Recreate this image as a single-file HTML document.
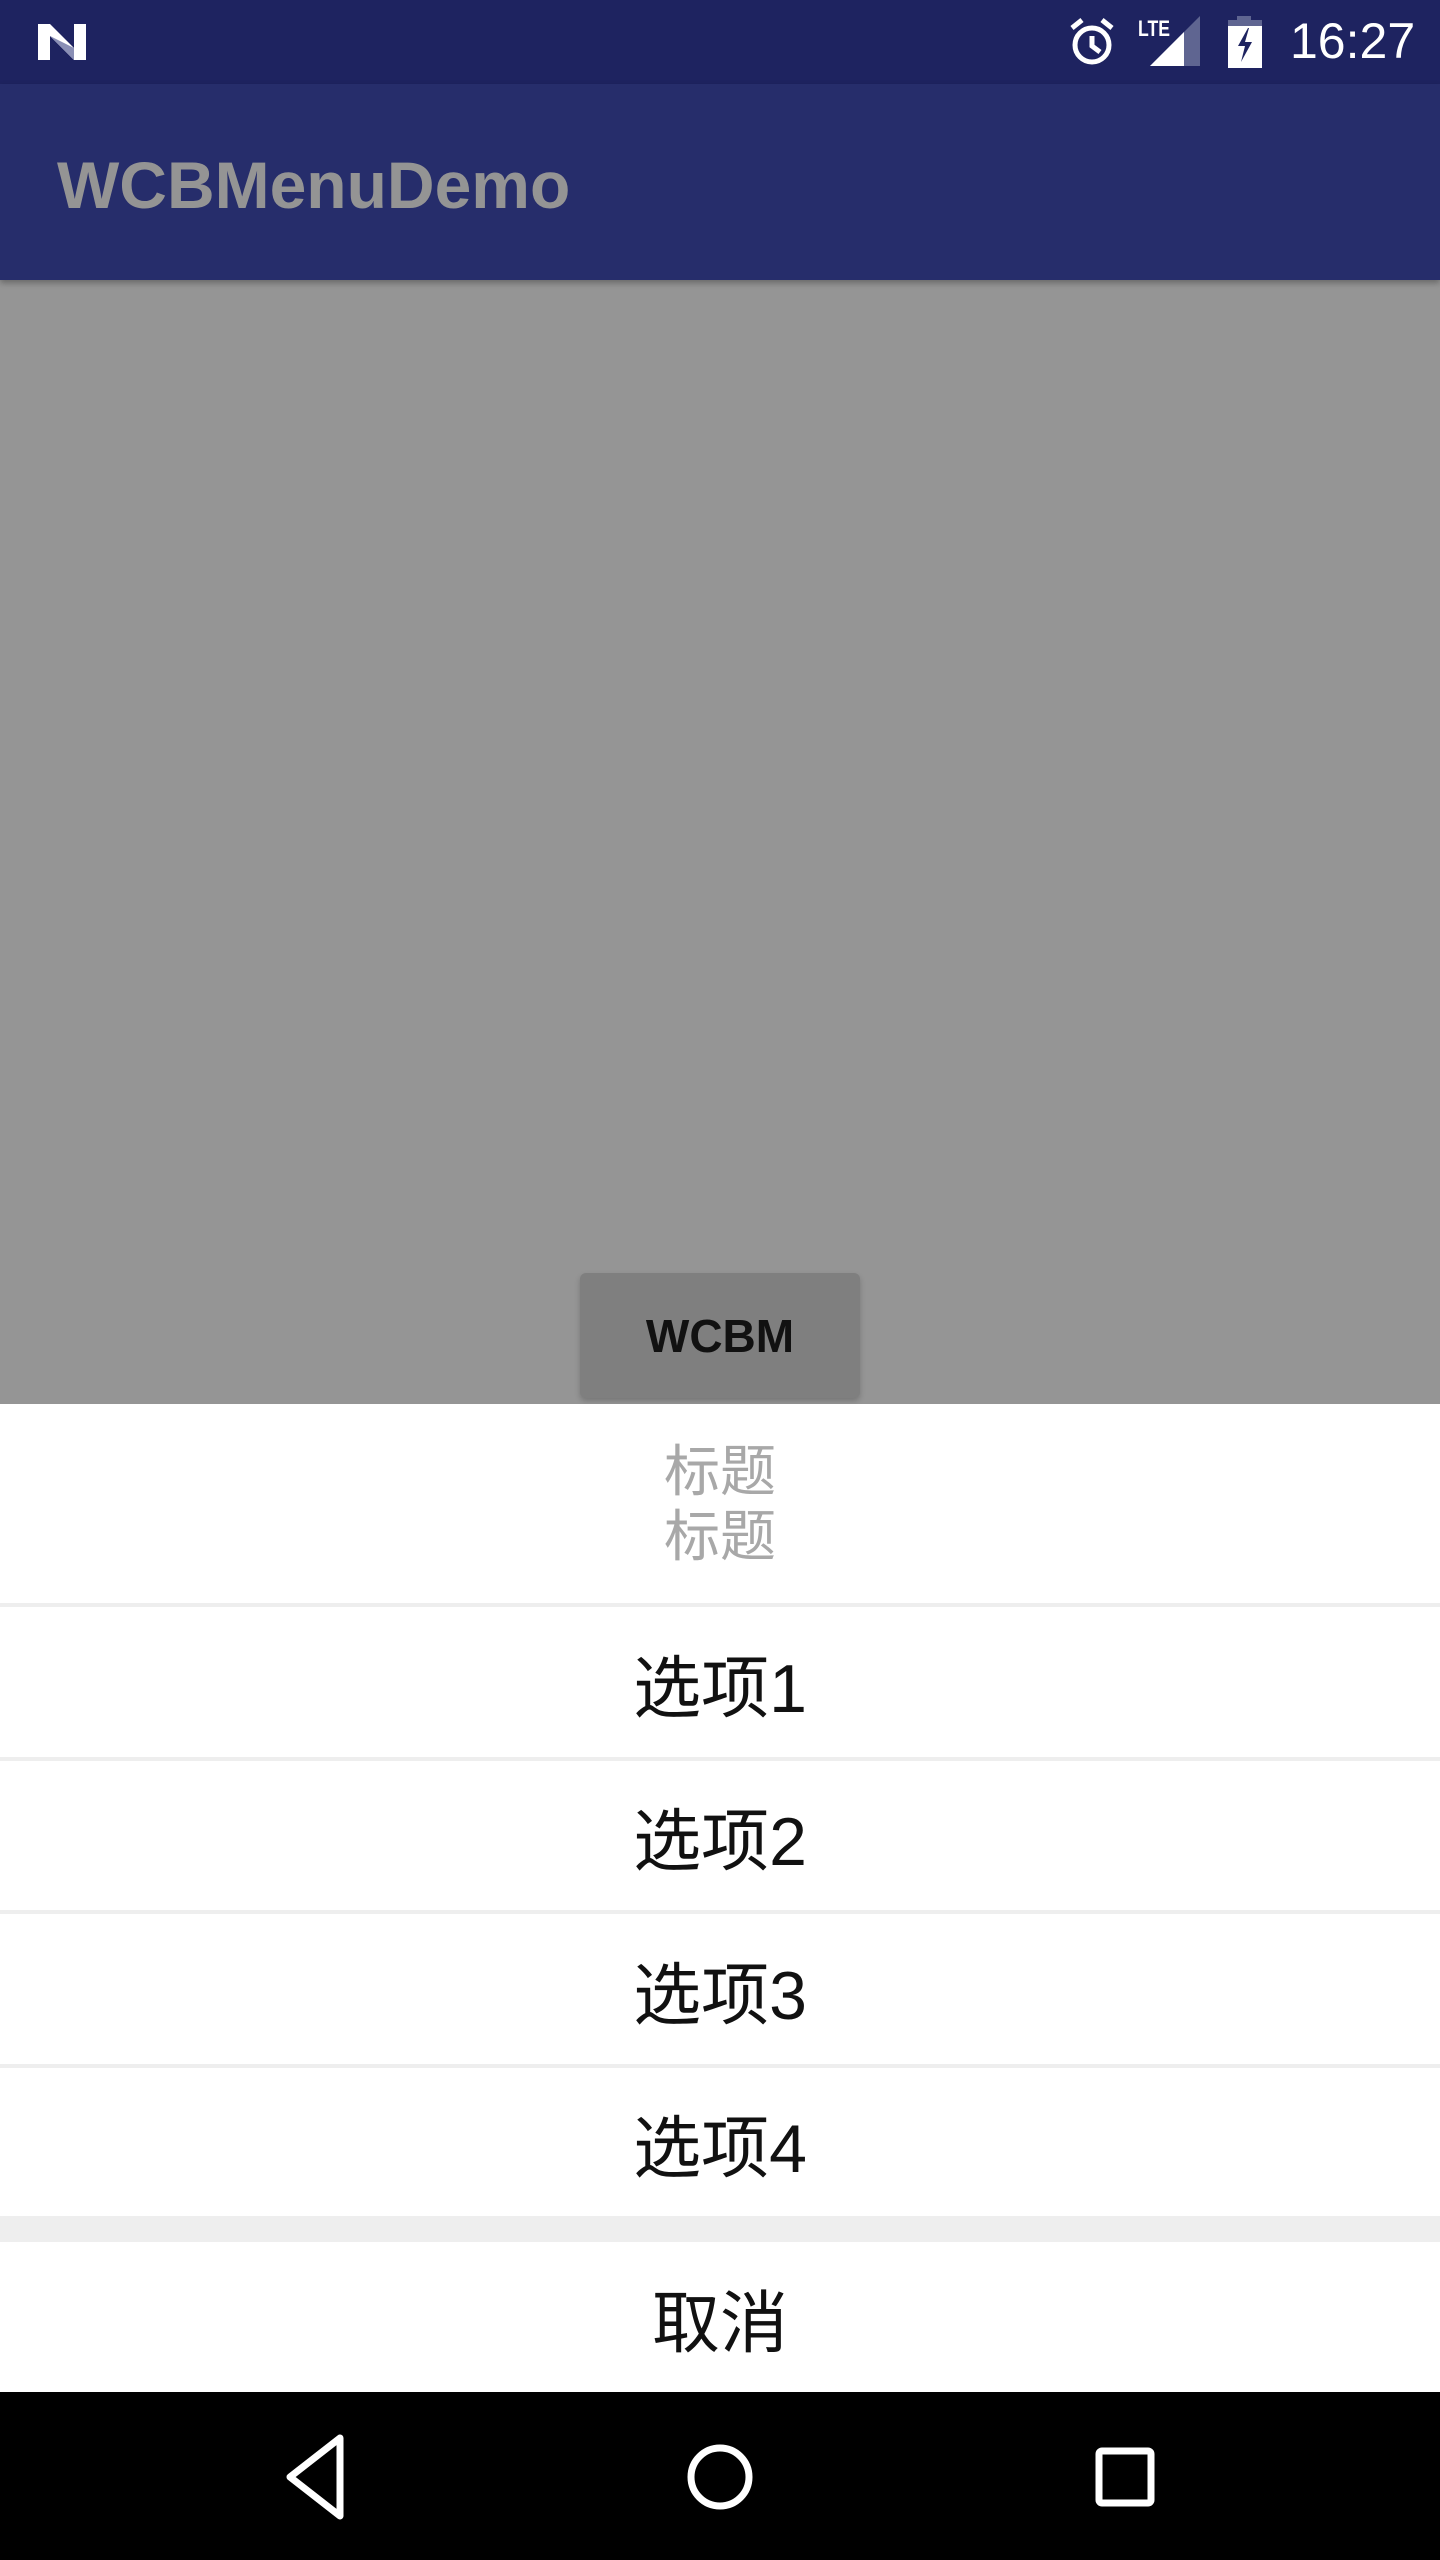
<!DOCTYPE html>
<html><head><meta charset="utf-8"><style>
body{margin:0;width:1440px;height:2560px;position:relative;overflow:hidden;background:#959595;font-family:"Liberation Sans","Noto Sans CJK SC",sans-serif}
.a{position:absolute;left:0;width:1440px}
.opt{position:absolute;left:0;width:1440px;background:#fff;text-align:center;color:#111;font-size:68px;display:flex;align-items:center;justify-content:center}
</style></head><body>
<div class="a" style="top:0;height:84px;background:#1e2360"></div>
<svg style="position:absolute;left:36px;top:22px" width="52" height="40" viewBox="0 0 52 40"><path d="M2 2h12l24 24V2h12v36H38L14 14v24H2z" fill="#fff"/><path d="M14 14L38 38V26z" fill="#8a8fb5"/></svg>
<svg style="position:absolute;left:1066px;top:15px" width="52" height="52" viewBox="0 0 52 52" fill="none" stroke="#fff" stroke-width="5"><circle cx="26" cy="30" r="17"/><path d="M26 21v10l8 6M6 13l10-8M46 13l-10-8"/></svg>
<div style="position:absolute;left:1138px;top:16px;color:#fff;font-size:22px;font-weight:bold;transform:scaleX(.8);transform-origin:left">LTE</div>
<svg style="position:absolute;left:1150px;top:16px" width="50" height="50" viewBox="0 0 50 50"><path d="M0 50L50 0v50z" fill="#5f6591"/><path d="M0 50L34 16v34z" fill="#fff"/></svg>
<svg style="position:absolute;left:1228px;top:16px" width="34" height="52" viewBox="0 0 34 52"><rect x="9" y="0" width="14" height="6" fill="#5f6591"/><rect x="0" y="4" width="34" height="14" fill="#5f6591"/><rect x="0" y="18" width="34" height="34" fill="#fff"/><rect x="0" y="10" width="34" height="10" fill="#fff"/><path d="M20 12l-10 18h7l-4 16 11-20h-7l4-14z" fill="#1e2360"/></svg>
<div style="position:absolute;left:1290px;top:12px;color:#fff;font-size:50px">16:27</div>
<div class="a" style="top:84px;height:196px;background:#262d6b;box-shadow:0 3px 6px rgba(0,0,0,.3)"></div>
<div style="position:absolute;left:57px;top:143px;color:#949494;font-size:66px;font-weight:bold;line-height:84px">WCBMenuDemo</div>
<div style="position:absolute;left:580px;top:1273px;width:280px;height:125px;background:#7f7f7f;border-radius:6px;box-shadow:0 3px 6px rgba(0,0,0,.2);display:flex;align-items:center;justify-content:center;color:#111;font-size:46px;font-weight:bold">WCBM</div>
<div class="a" style="top:1404px;height:1156px;background:#eee"></div>
<div class="opt" style="top:1404px;height:199px;color:#a8a8a8;font-size:56px;line-height:65px;flex-direction:column"><div>标题</div><div>标题</div></div>
<div class="opt" style="top:1607px;height:150px">选项1</div>
<div class="opt" style="top:1761px;height:149px">选项2</div>
<div class="opt" style="top:1914px;height:150px">选项3</div>
<div class="opt" style="top:2068px;height:148px">选项4</div>
<div class="opt" style="top:2242px;height:150px">取消</div>
<div class="a" style="top:2392px;height:168px;background:#000"></div>
<svg style="position:absolute;left:0;top:2392px" width="1440" height="168"><path d="M340 85V46L290 85l50 39z" fill="none" stroke="#fff" stroke-width="7" stroke-linejoin="round"/><circle cx="720" cy="85" r="29" fill="none" stroke="#fff" stroke-width="7"/><rect x="1099" y="59" width="52" height="52" rx="3" fill="none" stroke="#fff" stroke-width="7"/></svg>
</body></html>
